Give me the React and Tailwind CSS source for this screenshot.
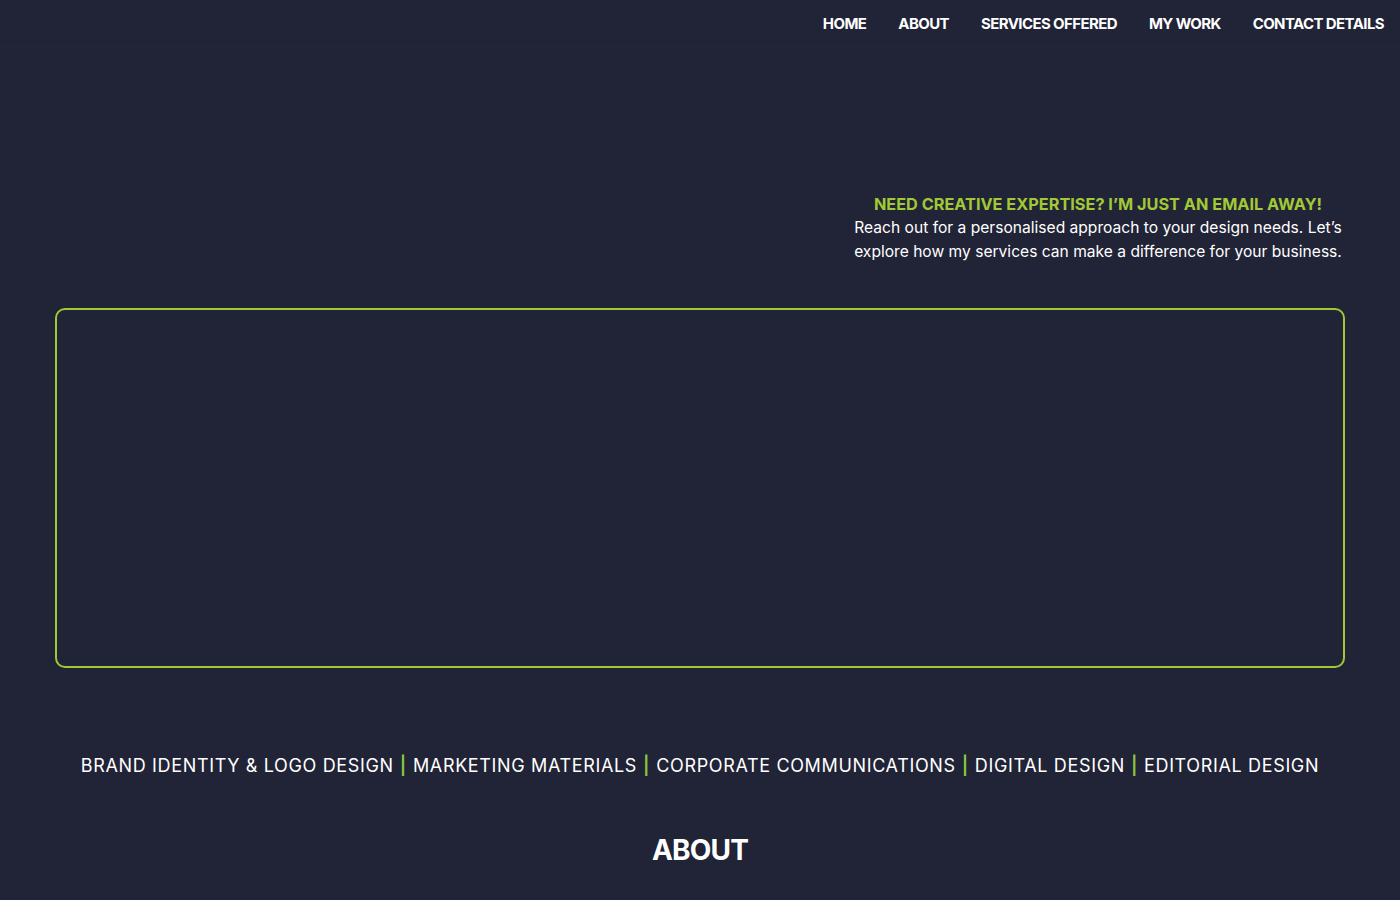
import React from "react";

const navLinks = ["HOME", "ABOUT", "SERVICES OFFERED", "MY WORK", "CONTACT DETAILS"];

const services = [
  "BRAND IDENTITY & LOGO DESIGN",
  "MARKETING MATERIALS",
  "CORPORATE COMMUNICATIONS",
  "DIGITAL DESIGN",
  "EDITORIAL DESIGN",
];

export default function App() {
  return (
    <div
      className="min-h-[900px] bg-[#212336] text-white"
      style={{ fontFamily: "Inter, 'Noto Sans', sans-serif" }}
    >
      {/* top nav */}
      <header className="h-[47px] border-b border-[#262839] flex items-center justify-end pr-4 pt-[3px]">
        <nav className="flex items-center gap-8">
          {navLinks.map((link) => (
            <a
              key={link}
              href="#"
              className="text-[15px] font-bold tracking-[-0.04em] text-white"
            >
              {link}
            </a>
          ))}
        </nav>
      </header>

      <main className="px-[55px]">
        {/* contact teaser */}
        <div className="flex justify-end pt-[145px]">
          <div className="w-[494px] text-center">
            <h3 className="text-[16.3px] font-bold text-[#a1c935] leading-6">
              NEED CREATIVE EXPERTISE? I&rsquo;M JUST AN EMAIL AWAY!
            </h3>
            <p className="text-[15.6px] leading-6 text-white">
              Reach out for a personalised approach to your design needs. Let&rsquo;s
              explore how my services can make a difference for your business.
            </p>
          </div>
        </div>

        {/* showcase frame */}
        <div className="mt-[44px] h-[360px] rounded-[10px] border-2 border-[#a1c935]" />

        {/* services strip */}
        <p className="mt-[86px] text-center text-[18px] tracking-[0.036em] leading-6">
          {services.map((s, i) => (
            <React.Fragment key={s}>
              {i > 0 && <span className="text-[#8cc63f] font-semibold mx-[6px]">|</span>}
              {s}
            </React.Fragment>
          ))}
        </p>

        <h2 className="mt-[51px] text-center text-[28px] font-bold tracking-[-0.03em]">
          ABOUT
        </h2>
      </main>
    </div>
  );
}
